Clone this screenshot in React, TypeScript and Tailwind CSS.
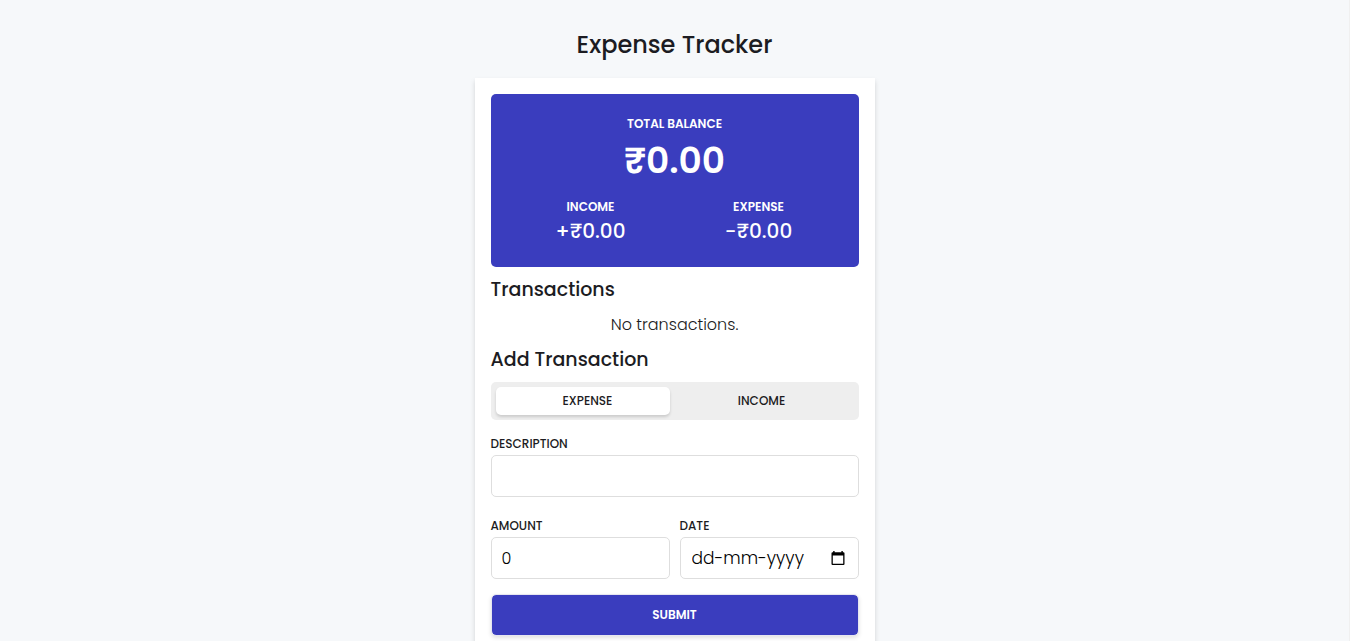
import { useState } from "react";
import type { FormEvent } from "react";

const labelClass = "block text-xs leading-[22px] font-medium uppercase";
const fieldClass =
  "h-[42px] w-full rounded-[5px] border border-[#dedede] bg-white px-2.5 text-base font-light text-black outline-none focus:border-[#3a3dbe]";

function CalendarIcon() {
  return (
    <svg width="14" height="16" viewBox="0 0 14 16" aria-hidden="true">
      <path
        fill="#000"
        fillRule="evenodd"
        d="M2.2 1h1.4v1.3h6.8V1h1.4v1.3h.7a1 1 0 0 1 1 1V14a1 1 0 0 1-1 1h-11a1 1 0 0 1-1-1V3.3a1 1 0 0 1 1-1h.7V1ZM1.8 5.6v8.2h10.4V5.6H1.8Z"
      />
    </svg>
  );
}

function Total({ title, value }: { title: string; value: string }) {
  return (
    <div>
      <h3 className="text-xs leading-5 font-semibold uppercase">{title}</h3>
      <p className="text-xl leading-7 font-medium">{value}</p>
    </div>
  );
}

export default function App() {
  const [kind, setKind] = useState("expense");
  const [description, setDescription] = useState("");
  const [amount, setAmount] = useState("0");
  const [date, setDate] = useState("");

  return (
    <div className="min-h-screen border-r border-[#f0f0f0] bg-[#f6f8fa] pt-[29px] font-['Poppins','Inter','Noto_Sans',sans-serif] text-[#1c1c22]">
      <h1 className="text-center text-2xl leading-8 font-medium">Expense Tracker</h1>

      <main className="mx-auto mt-[17px] w-full max-w-[400px] bg-white p-4 shadow-[0_3px_5px_rgba(0,0,0,0.15)]">
        <section className="rounded-[5px] bg-[#3a3dbe] px-4 pt-5 pb-[22px] text-center text-white">
          <h2 className="text-xs leading-5 font-semibold uppercase">Total Balance</h2>
          <p className="text-4xl leading-[54px] font-semibold">₹0.00</p>
          <div className="mt-[9px] grid grid-cols-2">
            <Total title="Income" value="+₹0.00" />
            <Total title="Expense" value="-₹0.00" />
          </div>
        </section>

        <section className="mt-2">
          <h2 className="text-[19px] leading-[30px] font-medium">Transactions</h2>
          <p className="mt-1.5 text-center text-base leading-7 font-light">No transactions.</p>
        </section>

        <section className="mt-1.5">
          <h2 className="text-[19px] leading-[30px] font-medium">Add Transaction</h2>
          <form onSubmit={(event: FormEvent) => event.preventDefault()}>
            <fieldset className="relative mt-[7px] grid grid-cols-2 rounded-[5px] bg-[#eeeeee] px-2.5 py-[5px]">
              <span
                aria-hidden="true"
                className={
                  "absolute inset-y-[5px] w-[calc(50%-10px)] rounded-[5px] bg-white shadow-[0_2px_3px_rgba(0,0,0,0.15)] " +
                  (kind === "expense" ? "left-[5px]" : "right-[5px]")
                }
              />
              {["expense", "income"].map((option) => (
                <label
                  key={option}
                  className="z-10 cursor-pointer text-center text-xs leading-7 font-medium uppercase"
                >
                  <input
                    type="radio"
                    name="kind"
                    value={option}
                    checked={kind === option}
                    onChange={() => setKind(option)}
                    className="sr-only"
                  />
                  {option}
                </label>
              ))}
            </fieldset>

            <div className="mt-[13px]">
              <label htmlFor="description" className={labelClass}>Description</label>
              <input
                id="description"
                type="text"
                value={description}
                onChange={(event) => setDescription(event.target.value)}
                className={fieldClass}
              />
            </div>

            <div className="mt-[18px] grid grid-cols-2 gap-2.5">
              <div>
                <label htmlFor="amount" className={labelClass}>Amount</label>
                <input
                  id="amount"
                  type="text"
                  inputMode="decimal"
                  value={amount}
                  onChange={(event) => setAmount(event.target.value)}
                  className={fieldClass}
                />
              </div>
              <div>
                <label htmlFor="date" className={labelClass}>Date</label>
                <div className="flex h-[42px] items-center rounded-[5px] border border-[#dedede] bg-white pr-[13px] pl-[11px] focus-within:border-[#3a3dbe]">
                  <input
                    id="date"
                    type="text"
                    placeholder="dd-mm-yyyy"
                    value={date}
                    onChange={(event) => setDate(event.target.value)}
                    className="min-w-0 flex-1 pt-0.5 text-[17px] font-light text-black outline-none placeholder:text-black"
                  />
                  <button type="button" aria-label="Choose date">
                    <CalendarIcon />
                  </button>
                </div>
              </div>
            </div>

            <button
              type="submit"
              className="mt-[15px] h-[42px] w-full cursor-pointer rounded-[5px] border border-[#e6e6f0] bg-[#3a3dbe] bg-clip-padding text-xs font-semibold text-white uppercase shadow-[0_2px_4px_rgba(0,0,0,0.12)]"
            >
              Submit
            </button>
          </form>
        </section>
      </main>
    </div>
  );
}
